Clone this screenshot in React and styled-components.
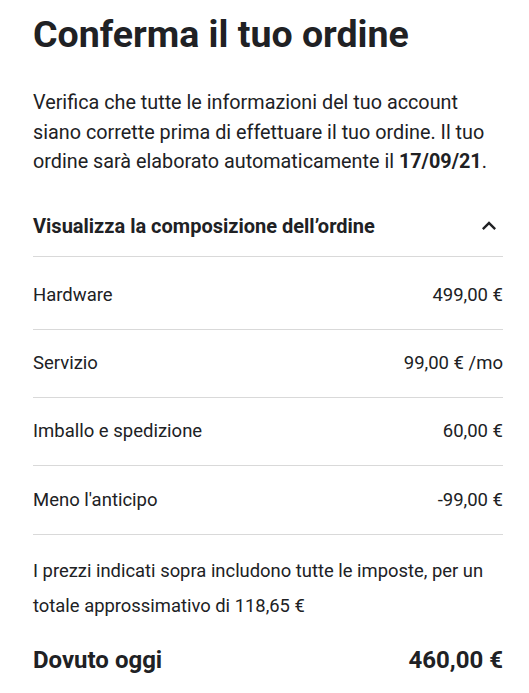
import styled, { createGlobalStyle } from "styled-components";

const Global = createGlobalStyle`
  body {
    margin: 0;
    background: #fff;
    font-family: Roboto, "Noto Sans", sans-serif;
    color: #202124;
  }
`;

const Page = styled.div`
  padding: 10px 26px 20px 33px;
`;

const Title = styled.h1`
  margin: 0;
  font-size: 37.5px;
  line-height: 48px;
  font-weight: 700;
`;

const Intro = styled.p`
  margin: 30px 0 0;
  font-size: 19.8px;
  line-height: 29.5px;
  b {
    font-weight: 700;
  }
`;

const Toggle = styled.div`
  margin-top: 20px;
  display: flex;
  justify-content: space-between;
  align-items: center;
  height: 60px;
  box-sizing: border-box;
  border-bottom: 1px solid #d9d9d9;
  font-size: 20px;
  font-weight: 700;
`;

const List = styled.div`
  padding-top: 5px;
`;

const Row = styled.div`
  display: flex;
  justify-content: space-between;
  align-items: center;
  height: ${(p) => (p.$last ? 69 : 68)}px;
  box-sizing: border-box;
  border-bottom: 1px solid #d9d9d9;
  font-size: 18.5px;
`;

const Note = styled.p`
  margin: 18px 0 0;
  font-size: 18.4px;
  line-height: 35px;
`;

const Total = styled.div`
  margin-top: 23px;
  display: flex;
  justify-content: space-between;
  align-items: center;
  font-size: 24px;
  line-height: 28px;
  font-weight: 700;
`;

const Chevron = () => (
  <svg width="28" height="28" viewBox="0 0 24 24" fill="#202124">
    <path d="M12 8l-6 6 1.41 1.41L12 10.83l4.59 4.58L18 14z" />
  </svg>
);

const items = [
  ["Hardware", "499,00 €"],
  ["Servizio", "99,00 € /mo"],
  ["Imballo e spedizione", "60,00 €"],
  ["Meno l'anticipo", "-99,00 €"],
];

export default function App() {
  return (
    <Page>
      <Global />
      <Title>Conferma il tuo ordine</Title>
      <Intro>
        Verifica che tutte le informazioni del tuo account siano corrette prima di effettuare il tuo ordine. Il tuo ordine sarà elaborato automaticamente il <b>17/09/21</b>.
      </Intro>
      <Toggle>
        <span>Visualizza la composizione dell’ordine</span>
        <Chevron />
      </Toggle>
      <List>
        {items.map(([label, value], i) => (
          <Row key={label} $last={i === items.length - 1}>
            <span>{label}</span>
            <span>{value}</span>
          </Row>
        ))}
      </List>
      <Note>
        I prezzi indicati sopra includono tutte le imposte, per un totale approssimativo di 118,65 €
      </Note>
      <Total>
        <span>Dovuto oggi</span>
        <span>460,00 €</span>
      </Total>
    </Page>
  );
}
